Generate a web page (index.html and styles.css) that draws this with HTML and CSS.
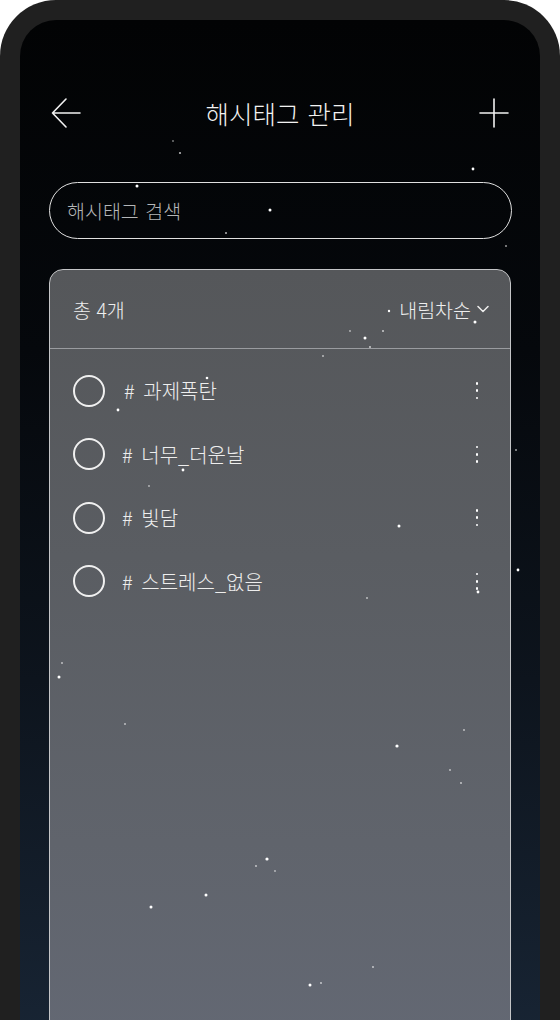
FILE: index.html
```html
<!DOCTYPE html>
<html lang="ko">
<head>
<meta charset="utf-8">
<title>해시태그 관리</title>
<link rel="stylesheet" href="styles.css">
</head>
<body>
<div class="phone">
  <div class="screen">
    <header class="topbar">
      <button class="icon-btn" aria-label="뒤로">
        <svg width="30" height="30" viewBox="0 0 30 30" fill="none" stroke="#f2f2f2" stroke-width="1.6" stroke-linecap="round" stroke-linejoin="round"><path d="M29 15 H1.5 M15 1 L1.5 15 L15 29"/></svg>
      </button>
      <h1 class="title">해시태그 관리</h1>
      <button class="icon-btn" aria-label="추가">
        <svg width="30" height="30" viewBox="0 0 30 30" fill="none" stroke="#f2f2f2" stroke-width="1.6" stroke-linecap="round"><path d="M15 1 V29 M1 15 H29"/></svg>
      </button>
    </header>

    <div class="search">해시태그 검색</div>

    <section class="card">
      <div class="card-head">
        <span class="count">총 4개</span>
        <span class="sort">내림차순
          <svg width="12" height="8" viewBox="0 0 12 8" fill="none" stroke="#eeeeee" stroke-width="1.5" stroke-linecap="round" stroke-linejoin="round"><path d="M1 1.5 L6 6.5 L11 1.5"/></svg>
        </span>
      </div>
      <ul class="tags">
        <li class="tag"><span class="check"></span><span class="tag-name first"># 과제폭탄</span><span class="kebab"><i></i><i></i><i></i></span></li>
        <li class="tag"><span class="check"></span><span class="tag-name"># 너무_더운날</span><span class="kebab"><i></i><i></i><i></i></span></li>
        <li class="tag"><span class="check"></span><span class="tag-name"># 빛담</span><span class="kebab"><i></i><i></i><i></i></span></li>
        <li class="tag"><span class="check"></span><span class="tag-name"># 스트레스_없음</span><span class="kebab"><i></i><i></i><i></i></span></li>
      </ul>
    </section>
  </div>
</div>

<svg class="stars" width="560" height="1020" viewBox="0 0 560 1020" aria-hidden="true">
  <g fill="#ffffff">
    <circle cx="180" cy="153" r="1.1" opacity="0.7"/>
    <circle cx="173" cy="141" r="0.9" opacity="0.5"/>
    <circle cx="137" cy="186" r="1.5"/>
    <circle cx="270" cy="210" r="1.5"/>
    <circle cx="226" cy="233" r="1" opacity="0.7"/>
    <circle cx="506" cy="246" r="1" opacity="0.6"/>
    <circle cx="473" cy="169" r="1.4"/>
    <circle cx="389" cy="311" r="1.2"/>
    <circle cx="475" cy="322" r="1.5"/>
    <circle cx="350" cy="331" r="0.9" opacity="0.6"/>
    <circle cx="365" cy="338" r="1.5"/>
    <circle cx="383" cy="331" r="1" opacity="0.7"/>
    <circle cx="370" cy="347" r="1" opacity="0.7"/>
    <circle cx="323" cy="356" r="1" opacity="0.6"/>
    <circle cx="207" cy="378" r="1.3"/>
    <circle cx="118" cy="410" r="1.4"/>
    <circle cx="183" cy="470" r="1.4"/>
    <circle cx="149" cy="486" r="0.9" opacity="0.6"/>
    <circle cx="399" cy="526" r="1.5"/>
    <circle cx="516" cy="450" r="1" opacity="0.6"/>
    <circle cx="518" cy="570" r="1.4"/>
    <circle cx="478" cy="592" r="1.4"/>
    <circle cx="367" cy="598" r="1" opacity="0.6"/>
    <circle cx="62" cy="663" r="1" opacity="0.6"/>
    <circle cx="59" cy="677" r="1.5"/>
    <circle cx="125" cy="724" r="1" opacity="0.6"/>
    <circle cx="397" cy="746" r="1.6"/>
    <circle cx="464" cy="730" r="1" opacity="0.6"/>
    <circle cx="450" cy="770" r="1" opacity="0.6"/>
    <circle cx="461" cy="783" r="0.9" opacity="0.7"/>
    <circle cx="267" cy="859" r="1.6"/>
    <circle cx="256" cy="866" r="0.9" opacity="0.7"/>
    <circle cx="275" cy="871" r="0.9" opacity="0.6"/>
    <circle cx="206" cy="895" r="1.5"/>
    <circle cx="151" cy="907" r="1.5"/>
    <circle cx="373" cy="967" r="0.9" opacity="0.7"/>
    <circle cx="310" cy="985" r="1.5"/>
    <circle cx="321" cy="983" r="0.9" opacity="0.7"/>
  </g>
</svg>
</body>
</html>
```

FILE: styles.css
```css
* {
  box-sizing: border-box;
}

html, body {
  margin: 0;
  padding: 0;
  background: #ffffff;
  width: 560px;
  height: 1020px;
  overflow: hidden;
}

body {
  position: relative;
  font-family: "Noto Sans CJK KR", "Noto Sans", sans-serif;
  font-weight: 300;
  color: #f2f2f2;
}

.phone {
  width: 560px;
  height: 1120px;
  background: #202020;
  border-radius: 56px 56px 0 0;
  padding: 20px 20px 0;
}

.screen {
  height: 1100px;
  border-radius: 36px 36px 0 0;
  background: linear-gradient(180deg, #020304 0%, #05080c 30%, #0d141d 60%, #1a2839 100%);
  padding: 70px 28px 0 29px;
  display: flex;
  flex-direction: column;
}

.topbar {
  height: 45px;
  display: flex;
  align-items: center;
  justify-content: space-between;
  padding: 0 3px 0 2px;
}

.icon-btn {
  width: 30px;
  height: 30px;
  padding: 0;
  border: 0;
  background: none;
  display: flex;
}

.title {
  margin: 0;
  font-size: 25.5px;
  font-weight: 300;
  line-height: 45px;
  word-spacing: 1px;
  color: #f2f2f2;
}

.search {
  margin-top: 47px;
  height: 57px;
  border: 1.5px solid #e0e0e0;
  border-radius: 29px;
  padding-left: 17px;
  display: flex;
  align-items: center;
  font-size: 19.5px;
  color: #b4b6b8;
  word-spacing: 1px;
}

.card {
  margin-top: 30px;
  margin-right: 1px;
  height: 820px;
  border: 1px solid #c4c5c7;
  border-radius: 14px 14px 0 0;
  background: linear-gradient(180deg, #55575a 0%, #5a5d62 35%, #60646c 70%, #646975 100%);
}

.card-head {
  height: 79px;
  border-bottom: 1px solid #9a9ca0;
  display: flex;
  align-items: center;
  justify-content: space-between;
  padding: 0 21px 0 23px;
  font-size: 19.5px;
  color: #eeeeee;
}

.sort {
  display: flex;
  align-items: center;
  gap: 6px;
}

.tags {
  list-style: none;
  margin: 0;
  padding: 10px 0 0;
}

.tag {
  height: 63.5px;
  display: flex;
  align-items: center;
  padding: 0 30px 0 23px;
}

.check {
  width: 32px;
  height: 32px;
  border: 2px solid #f0f0f0;
  border-radius: 50%;
  flex: none;
}

.tag-name {
  margin-left: 17px;
  font-size: 20px;
  color: #eeeeee;
  flex: 1;
  word-spacing: 3px;
}

.tag-name.first {
  padding-left: 2px;
}

.kebab {
  width: 6px;
  display: flex;
  flex-direction: column;
  align-items: center;
  gap: 4.5px;
}

.kebab i {
  display: block;
  width: 2.6px;
  height: 2.6px;
  border-radius: 50%;
  background: #ffffff;
}

.stars {
  position: absolute;
  left: 0;
  top: 0;
  pointer-events: none;
}
```
